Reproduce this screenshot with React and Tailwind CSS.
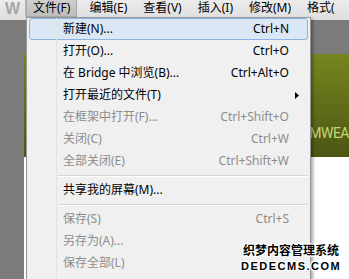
const menuBar = ['编辑(E)', '查看(V)', '插入(I)', '修改(M)', '格式('];

const items = [
  { label: '新建(N)...', key: 'Ctrl+N', active: true },
  { label: '打开(O)...', key: 'Ctrl+O' },
  { label: '在 Bridge 中浏览(B)...', key: 'Ctrl+Alt+O' },
  { label: '打开最近的文件(T)', sub: true },
  { label: '在框架中打开(F)...', key: 'Ctrl+Shift+O', disabled: true },
  { label: '关闭(C)', key: 'Ctrl+W', disabled: true },
  { label: '全部关闭(E)', key: 'Ctrl+Shift+W', disabled: true },
  { sep: true },
  { label: '共享我的屏幕(M)...' },
  { sep: true },
  { label: '保存(S)', key: 'Ctrl+S', disabled: true },
  { label: '另存为(A)...', disabled: true },
  { label: '保存全部(L)', disabled: true },
];

function MenuRow({ item }) {
  if (item.sep) {
    return (
      <div className="h-[7px] pl-[31px] pr-[2px] pt-[3px]">
        <div className="h-px bg-[#d7d7d7] border-b border-white box-content" />
      </div>
    );
  }
  const color = item.disabled ? 'text-[#8d8d8d]' : 'text-black';
  return (
    <div
      className={
        'mx-[2px] h-[22px] flex items-center pl-[33px] pr-[18px] rounded-[3px] border ' +
        (item.active ? 'bg-[#d5e5f6]/80 border-[#8fb3e0]' : 'border-transparent') +
        ' ' + color
      }
    >
      <span className="flex-1 whitespace-nowrap">{item.label}</span>
      {item.key && <span className="whitespace-nowrap">{item.key}</span>}
      {item.sub && (
        <svg width="4" height="7" viewBox="0 0 4 7" className="-mr-[10px]">
          <path d="M0 0 L4 3.5 L0 7 Z" fill="#000" />
        </svg>
      )}
    </div>
  );
}

export default function App() {
  return (
    <div className="relative w-[349px] h-[279px] overflow-hidden bg-white text-[12px] leading-[16px] font-['Noto_Sans','Noto_Sans_CJK_SC',sans-serif]">
      {/* menu bar */}
      <div className="h-[20px] flex bg-gradient-to-b from-[#ececec] to-[#dedede]">
        <div className="w-[26px] h-[17px] flex items-center justify-center border-r border-[#b4b4b4] font-['Liberation_Sans',sans-serif] font-bold text-[16px] leading-[17px] text-[#a6a6a6]">
          W
        </div>
        <div className="h-[17px] px-[6px] leading-[16px] bg-gradient-to-b from-[#cfcfcf] to-[#bdbdbd] border border-[#a9a9a9] border-t-0 mr-[4px]">
          文件(F)
        </div>
        {menuBar.map((m) => (
          <div key={m} className="h-[17px] px-[8px] leading-[16px] whitespace-nowrap">
            {m}
          </div>
        ))}
      </div>

      {/* document area */}
      <div className="flex h-[259px]">
        <div className="w-[26px] bg-[#7b7b7b]" />
        <div className="flex-1 flex flex-col">
          <div className="h-[34px] bg-[#7b7b7b]" />
          <div className="h-[103px] bg-gradient-to-b from-[#76861e] to-[#4d5614] flex items-end pb-[17px] pl-[285px]">
            <div className="text-[14px] leading-[14px] tracking-[-0.5px] text-[#c5d67a] font-['Roboto',sans-serif] whitespace-nowrap">
              MWEA
            </div>
          </div>
          <div className="flex-1 bg-white" />
        </div>
      </div>

      {/* dropdown menu */}
      <div className="absolute left-[26px] top-[17px] w-[285px] h-[280px] bg-[#f0f0f0] border border-[#979797] shadow-[2px_2px_3px_rgba(0,0,0,0.35)]">
        <div className="absolute left-[29px] top-0 bottom-0 w-[2px] border-l border-[#e2e3e3] z-10 pointer-events-none" />
        {items.map((item, i) => (
          <MenuRow key={i} item={item} />
        ))}
      </div>

      {/* watermark */}
      <div className="absolute left-[241px] top-[243px] flex flex-col items-center font-bold text-black [text-shadow:-1px_-1px_0_#fff,1px_-1px_0_#fff,-1px_1px_0_#fff,1px_1px_0_#fff,0_1px_0_#fff,0_-1px_0_#fff,1px_0_0_#fff,-1px_0_0_#fff]">
        <span className="text-[12px] leading-[14px] font-['Noto_Sans_CJK_SC',sans-serif]">织梦内容管理系统</span>
        <span className="mt-[3px] text-[11px] leading-[12px] tracking-[1.5px] font-['Liberation_Sans',sans-serif]">DEDECMS.COM</span>
      </div>
    </div>
  );
}
